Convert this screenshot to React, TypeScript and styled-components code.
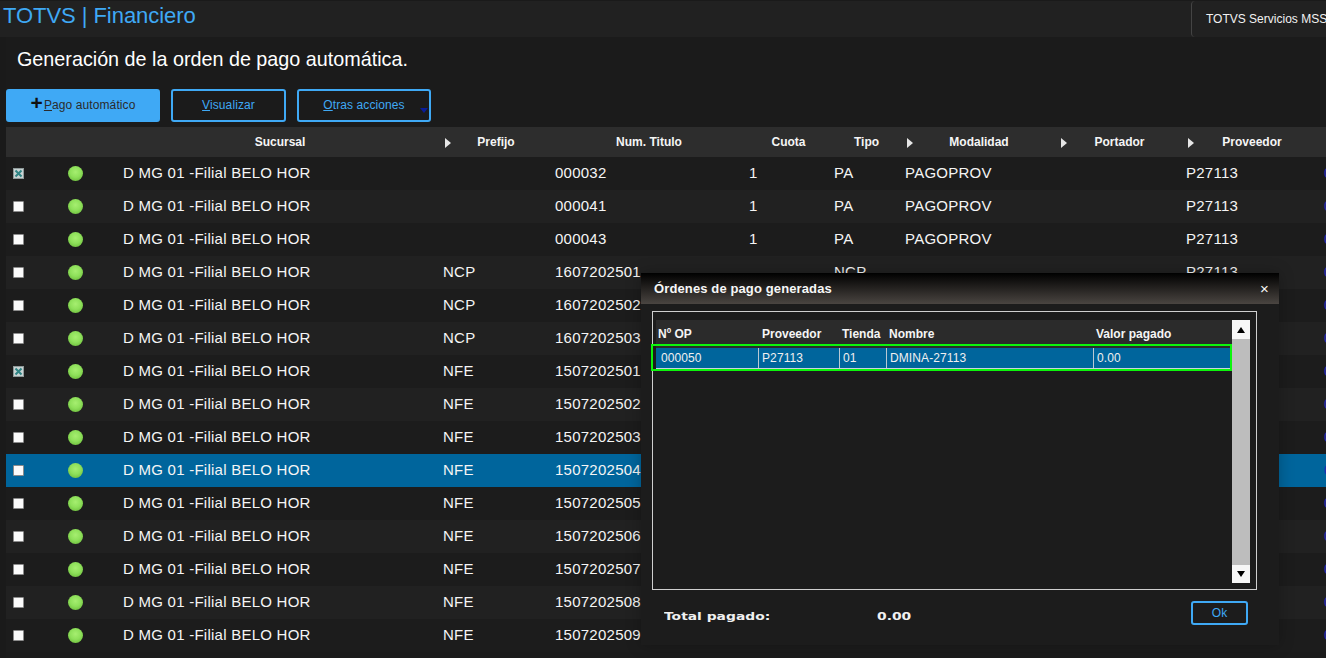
import React from "react";
import styled, { createGlobalStyle } from "styled-components";

const Global = createGlobalStyle`
  html, body { margin: 0; padding: 0; background: #171717; overflow: hidden; }
  body { font-family: "Liberation Sans", Arial, sans-serif; color: #fff; }
  #root { width: 1326px; height: 658px; }
`;

const Page = styled.div`
  position: relative;
  width: 1326px;
  height: 658px;
  overflow: hidden;
  display: flex;
  flex-direction: column;
  background: #1a1a1a;
`;
const TopBar = styled.header`
  flex: none;
  height: 36px;
  margin-top: 1px;
  background: #212121;
  display: flex;
  justify-content: space-between;
  align-items: stretch;
`;
const Brand = styled.div`
  font-size: 22px;
  line-height: 30px;
  padding-left: 3px;
  letter-spacing: -0.05px;
  color: #3fa9f5;
`;
const UserTab = styled.div`
  width: 135px;
  box-sizing: border-box;
  border-left: 1px solid #444;
  border-radius: 4px 0 0 4px;
  padding: 11px 0 0 14px;
  font-size: 12px;
  line-height: 14px;
  white-space: nowrap;
  overflow: hidden;
  color: #f2f2f2;
`;
const Content = styled.main`
  flex: 1;
  min-height: 0;
  margin-left: 6px;
  background: #1b1b1b;
  display: flex;
  flex-direction: column;
`;
const Heading = styled.h1`
  margin: 0;
  padding: 10px 0 0 11px;
  height: 42px;
  font-size: 19.75px;
  line-height: 24px;
  font-weight: 400;
  color: #fff;
`;
const Toolbar = styled.div`
  display: flex;
  gap: 11px;
  height: 33px;
  margin-bottom: 5px;
`;
const Button = styled.button<{ $primary?: boolean; $w: number }>`
  position: relative;
  width: ${(p) => p.$w}px;
  height: 33px;
  box-sizing: border-box;
  border: 2px solid #3fa9f5;
  border-radius: 3px;
  background: ${(p) => (p.$primary ? "#3fa9f5" : "#1b1b1b")};
  color: ${(p) => (p.$primary ? "#2b2b2b" : "#3fa9f5")};
  font: 12px "Liberation Sans", Arial, sans-serif;
  letter-spacing: 0.1px;
  padding: 0 0 2px;
  u { text-decoration: underline; }
`;
const Plus = styled.span`
  font-size: 21px;
  font-weight: 700;
  line-height: 12px;
  color: #111;
  margin-right: 1px;
  vertical-align: -1px;
`;
const Caret = styled.span`
  position: absolute;
  right: 1px;
  bottom: 7px;
  width: 0;
  height: 0;
  border-left: 4px solid transparent;
  border-right: 4px solid transparent;
  border-top: 5px solid #0a1c96;
`;

const COLS = "111px 320px 112px 194px 85px 71px 154px 127px 138px 20px";
const HeadRow = styled.div`
  display: grid;
  grid-template-columns: ${COLS};
  height: 30px;
  background: #2d2d2d;
`;
const HeadCell = styled.div<{ $sort?: boolean }>`
  position: relative;
  padding-left: 6px;
  text-align: center;
  font-size: 12px;
  font-weight: 700;
  line-height: 30px;
  color: #f5f5f5;
  ${(p) =>
    p.$sort &&
    `&::before {
      content: "";
      position: absolute;
      left: 8px;
      top: 11px;
      border-left: 6px solid #e6e6e6;
      border-top: 5px solid transparent;
      border-bottom: 5px solid transparent;
    }`}
`;
const Row = styled.div<{ $alt: boolean; $sel: boolean }>`
  display: grid;
  grid-template-columns: ${COLS};
  height: 33px;
  flex: none;
  background: ${(p) => (p.$sel ? "#00659c" : p.$alt ? "#212121" : "#1c1c1c")};
`;
const Cell = styled.div<{ $blue?: boolean }>`
  padding-left: 6px;
  font-size: 15px;
  letter-spacing: 0.25px;
  line-height: 32px;
  white-space: nowrap;
  overflow: hidden;
  color: ${(p) => (p.$blue ? "#2a2ab0" : "#f5f5f5")};
`;
const Marks = styled.div`
  display: flex;
  align-items: center;
  padding-left: 7px;
`;
const Box = styled.span`
  width: 9px;
  height: 9px;
  background: #fbfbfb;
  border: 1px solid #8c8c8c;
  border-radius: 1px;
  display: block;
  flex: none;
`;
const CheckedBox = styled.svg`
  width: 11px;
  height: 11px;
  display: block;
  flex: none;
`;
const Ball = styled.span`
  width: 15px;
  height: 15px;
  margin-left: 44px;
  border-radius: 50%;
  flex: none;
  background: radial-gradient(circle at 50% 40%, #a6ee70 0%, #8ee05a 45%, #62b233 100%);
`;

const Modal = styled.section`
  position: absolute;
  left: 641px;
  top: 273px;
  width: 638px;
  height: 372px;
  background: #1c1c1c;
  box-shadow: 0 0 14px rgba(0, 0, 0, 0.25);
  display: flex;
  flex-direction: column;
`;
const ModalTitle = styled.div`
  height: 31px;
  flex: none;
  display: flex;
  align-items: center;
  justify-content: space-between;
  padding: 0 10px 0 13px;
  background: linear-gradient(#000000, #4a4541);
  font-size: 13px;
  letter-spacing: 0.12px;
  font-weight: 700;
  color: #f7f7f7;
`;
const CloseMark = styled.span`
  font-size: 15px;
  font-weight: 400;
  line-height: 15px;
`;
const ListBox = styled.div`
  position: relative;
  margin: 7px 22px 0 11px;
  height: 279px;
  box-sizing: border-box;
  border: 1px solid #cfcfcf;
  padding: 8px 6px 6px 3px;
  display: flex;
`;
const ListMain = styled.div`
  flex: 1;
  min-width: 0;
`;
const MCOLS = "103px 81px 47px 207px 1fr";
const MHead = styled.div`
  display: grid;
  grid-template-columns: ${MCOLS};
  height: 28px;
  background: #2b2b2b;
`;
const MHeadCell = styled.div<{ $pad?: number }>`
  padding-left: ${(p) => p.$pad ?? 2}px;
  font-size: 12px;
  font-weight: 700;
  line-height: 28px;
  color: #f5f5f5;
`;
const MRow = styled.div`
  display: grid;
  grid-template-columns: ${MCOLS};
  height: 21px;
  background: #00659c;
  border-bottom: 1px solid #c8d4dc;
  box-sizing: border-box;
`;
const MCell = styled.div<{ $first?: boolean }>`
  border-right: 1px solid #b9c9d4;
  box-sizing: border-box;
  padding-left: ${(p) => (p.$first ? 5 : 3)}px;
  font-size: 12px;
  letter-spacing: 0.1px;
  line-height: 20px;
  color: #f0f0f0;
  &:last-child { border-right: 0; }
`;
const Highlight = styled.div`
  position: absolute;
  left: -2px;
  top: 32px;
  width: 581px;
  height: 27px;
  box-sizing: border-box;
  border: 2px solid #0cf50c;
`;
const Scroll = styled.div`
  width: 18px;
  flex: none;
  display: flex;
  flex-direction: column;
  background: #bdbdbd;
`;
const ScrollBtn = styled.div<{ $h: number }>`
  height: ${(p) => p.$h}px;
  flex: none;
  background: #f7f7f7;
  display: flex;
  align-items: center;
  justify-content: center;
`;
const TriUp = styled.span`
  border-left: 4px solid transparent;
  border-right: 4px solid transparent;
  border-bottom: 6px solid #000;
`;
const TriDown = styled.span`
  border-left: 4px solid transparent;
  border-right: 4px solid transparent;
  border-top: 6px solid #000;
`;
const Track = styled.div`
  flex: 1;
`;
const Footer = styled.div`
  flex: 1;
  display: flex;
  align-items: flex-start;
  padding: 11px 31px 0 23px;
`;
const Total = styled.div<{ $w?: number }>`
  width: ${(p) => (p.$w ? `${p.$w}px` : "auto")};
  margin-top: 9px;
  font-family: "DejaVu Sans", sans-serif;
  font-size: 11px;
  font-weight: 700;
  line-height: 13px;
  color: #f0f0f0;
  transform: scaleX(1.26);
  transform-origin: left center;
`;
const OkButton = styled.button`
  margin-left: auto;
  width: 57px;
  height: 24px;
  box-sizing: border-box;
  border: 2px solid #3fa9f5;
  border-radius: 3px;
  background: #1c1c1c;
  color: #3fa9f5;
  font: 12px "Liberation Sans", Arial, sans-serif;
  padding: 0;
`;

type R = { pre: string; num: string; cuota: string; tipo: string; mod: string; checked?: boolean };
const rows: R[] = [
  { pre: "", num: "000032", cuota: "1", tipo: "PA", mod: "PAGOPROV", checked: true },
  { pre: "", num: "000041", cuota: "1", tipo: "PA", mod: "PAGOPROV" },
  { pre: "", num: "000043", cuota: "1", tipo: "PA", mod: "PAGOPROV" },
  ...["1607202501", "1607202502", "1607202503"].map((num) => ({ pre: "NCP", num, cuota: "", tipo: "NCP", mod: "" })),
  { pre: "NFE", num: "1507202501", cuota: "", tipo: "NFE", mod: "", checked: true },
  ...["02", "03", "04", "05", "06", "07", "08", "09"].map((s) => ({
    pre: "NFE",
    num: "15072025" + s,
    cuota: "",
    tipo: "NFE",
    mod: "",
  })),
];

const heads: [string, boolean][] = [
  ["", false],
  ["Sucursal", false],
  ["Prefijo", true],
  ["Num. Titulo", false],
  ["Cuota", false],
  ["Tipo", false],
  ["Modalidad", true],
  ["Portador", true],
  ["Proveedor", true],
  ["", false],
];

export default function App() {
  return (
    <Page>
      <Global />
      <TopBar>
        <Brand>TOTVS | Financiero</Brand>
        <UserTab>TOTVS Servicios MSS</UserTab>
      </TopBar>
      <Content>
        <Heading>Generación de la orden de pago automática.</Heading>
        <Toolbar>
          <Button $primary $w={154}>
            <Plus>+</Plus>
            <u>P</u>ago automático
          </Button>
          <Button $w={115}>
            <u>V</u>isualizar
          </Button>
          <Button $w={134}>
            <u>O</u>tras acciones
            <Caret />
          </Button>
        </Toolbar>
        <HeadRow>
          {heads.map(([h, s], i) => (
            <HeadCell key={i} $sort={s}>
              {h}
            </HeadCell>
          ))}
        </HeadRow>
        {rows.map((r, i) => (
          <Row key={i} $alt={i % 2 === 1} $sel={i === 9}>
            <Marks>
              {r.checked ? (
                <CheckedBox viewBox="0 0 11 11">
                  <rect x="0.5" y="0.5" width="10" height="10" fill="#c9d3d3" stroke="#8f9a9a" />
                  <path d="M2.5 2.5 L8.5 8.5 M8.5 2.5 L2.5 8.5" stroke="#2f8484" strokeWidth="2" />
                </CheckedBox>
              ) : (
                <Box />
              )}
              <Ball />
            </Marks>
            <Cell>D MG 01 -Filial BELO HOR</Cell>
            <Cell>{r.pre}</Cell>
            <Cell>{r.num}</Cell>
            <Cell>{r.cuota}</Cell>
            <Cell>{r.tipo}</Cell>
            <Cell>{r.mod}</Cell>
            <Cell />
            <Cell>P27113</Cell>
            <Cell $blue>0</Cell>
          </Row>
        ))}
      </Content>
      <Modal>
        <ModalTitle>
          Órdenes de pago generadas
          <CloseMark>×</CloseMark>
        </ModalTitle>
        <ListBox>
          <ListMain>
            <MHead>
              <MHeadCell>Nº OP</MHeadCell>
              <MHeadCell $pad={3}>Proveedor</MHeadCell>
              <MHeadCell>Tienda</MHeadCell>
              <MHeadCell>Nombre</MHeadCell>
              <MHeadCell>Valor pagado</MHeadCell>
            </MHead>
            <MRow>
              <MCell $first>000050</MCell>
              <MCell>P27113</MCell>
              <MCell>01</MCell>
              <MCell>DMINA-27113</MCell>
              <MCell>0.00</MCell>
            </MRow>
          </ListMain>
          <Highlight />
          <Scroll>
            <ScrollBtn $h={19}>
              <TriUp />
            </ScrollBtn>
            <Track />
            <ScrollBtn $h={18}>
              <TriDown />
            </ScrollBtn>
          </Scroll>
        </ListBox>
        <Footer>
          <Total $w={213}>Total pagado:</Total>
          <Total>0.00</Total>
          <OkButton>Ok</OkButton>
        </Footer>
      </Modal>
    </Page>
  );
}
